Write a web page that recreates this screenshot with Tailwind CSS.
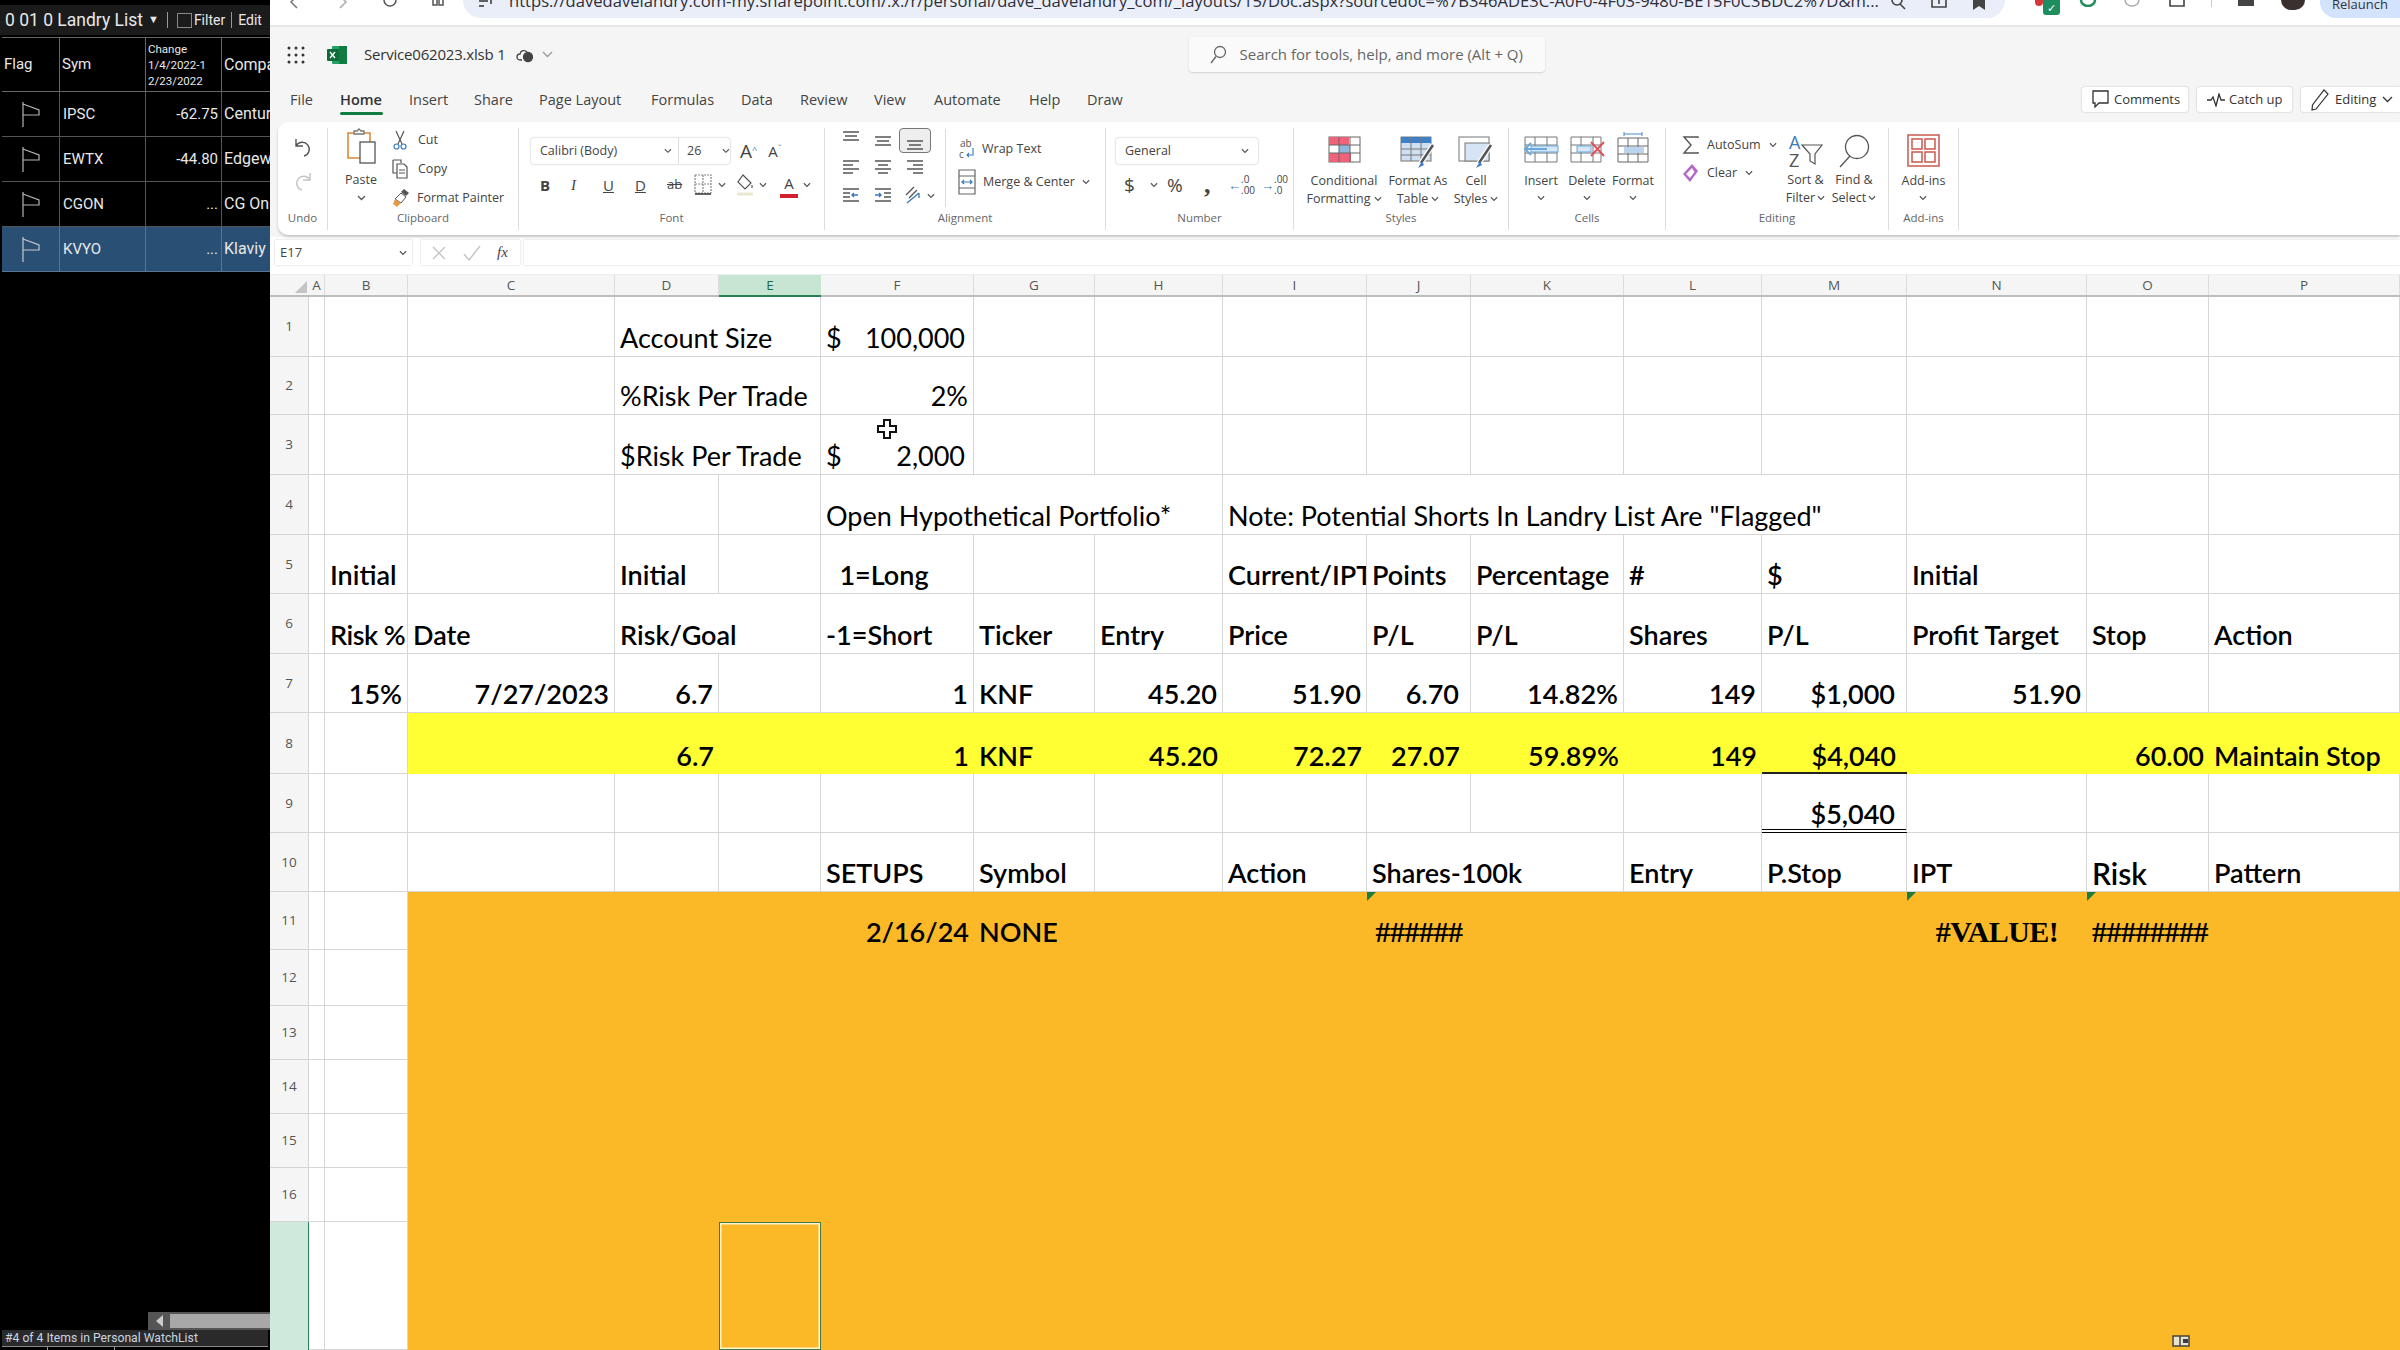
<!DOCTYPE html>
<html lang="en">
<head>
  <meta charset="UTF-8" />
  <title>Service062023.xlsb</title>
  <script src="https://cdn.jsdelivr.net/npm/@tailwindcss/browser@4"></script>
</head>
<body class="bg-white">
  <div class="flex w-[2400px] h-[1350px] overflow-hidden font-['Open_Sans',sans-serif] text-[#444]">

    <!-- Watchlist panel -->
    <aside class="w-[270px] shrink-0 bg-black flex flex-col text-[#e8e8e8] font-['Roboto',sans-serif] overflow-hidden">
      <div class="mt-[5px] h-[30px] bg-[#1b1b1b] flex items-center pl-[5px] text-[17.5px] whitespace-nowrap">
        <span>0 01 0 Landry List</span>
        <span class="ml-[5px] text-[11px]">▼</span>
        <span class="ml-[8px] h-[16px] border-l border-[#999]"></span>
        <span class="ml-[9px] w-[15px] h-[15px] border border-[#888]"></span>
        <span class="ml-[2px] text-[14px]">Filter</span>
        <span class="ml-[6px] h-[16px] border-l border-[#999]"></span>
        <span class="ml-[6px] text-[14px]">Edit</span>
      </div>
      <div class="mt-[2px] ml-[2px] grid grid-cols-[58px_86px_76px_48px] grid-rows-[55px_45px_45px_45px_45px] text-[15px]">
        <div class="border-y border-r border-[#666] flex items-center pl-[2px]">Flag</div>
        <div class="border-y border-r border-[#666] flex items-center pl-[2px]">Sym</div>
        <div class="border-y border-r border-[#666] flex flex-col justify-center pl-[2px] text-[11.5px] leading-[16px]"><span>Change</span><span>1/4/2022-1</span><span>2/23/2022</span></div>
        <div class="border-y border-[#666] flex items-center pl-[2px] text-[16px] whitespace-nowrap">Compa</div>

        <div class="border-b border-r border-[#555] flex items-center justify-center"><svg class="w-[22px] h-[27px]" viewBox="0 0 22 27" fill="none" stroke="#b4b4b4" stroke-width="1.2"><path d="M3 1v25M3 3l16 6v5H3"/></svg></div>
        <div class="border-b border-r border-[#555] flex items-center pl-[3px]">IPSC</div>
        <div class="border-b border-r border-[#555] flex items-center justify-end pr-[3px]">-62.75</div>
        <div class="border-b border-[#555] flex items-center pl-[2px] text-[16px] whitespace-nowrap">Centur</div>

        <div class="border-b border-r border-[#555] flex items-center justify-center"><svg class="w-[22px] h-[27px]" viewBox="0 0 22 27" fill="none" stroke="#b4b4b4" stroke-width="1.2"><path d="M3 1v25M3 3l16 6v5H3"/></svg></div>
        <div class="border-b border-r border-[#555] flex items-center pl-[3px]">EWTX</div>
        <div class="border-b border-r border-[#555] flex items-center justify-end pr-[3px]">-44.80</div>
        <div class="border-b border-[#555] flex items-center pl-[2px] text-[16px] whitespace-nowrap">Edgew</div>

        <div class="border-b border-r border-[#555] flex items-center justify-center"><svg class="w-[22px] h-[27px]" viewBox="0 0 22 27" fill="none" stroke="#b4b4b4" stroke-width="1.2"><path d="M3 1v25M3 3l16 6v5H3"/></svg></div>
        <div class="border-b border-r border-[#555] flex items-center pl-[3px]">CGON</div>
        <div class="border-b border-r border-[#555] flex items-center justify-end pr-[3px]">...</div>
        <div class="border-b border-[#555] flex items-center pl-[2px] text-[16px] whitespace-nowrap">CG On</div>

        <div class="bg-[#2a4f75] border-b border-r border-[#5a7590] flex items-center justify-center"><svg class="w-[22px] h-[27px]" viewBox="0 0 22 27" fill="none" stroke="#c8c8c8" stroke-width="1.2"><path d="M3 1v25M3 3l16 6v5H3"/></svg></div>
        <div class="bg-[#2a4f75] border-b border-r border-[#5a7590] flex items-center pl-[3px]">KVYO</div>
        <div class="bg-[#2a4f75] border-b border-r border-[#5a7590] flex items-center justify-end pr-[3px]">...</div>
        <div class="bg-[#2a4f75] border-b border-[#5a7590] flex items-center pl-[2px] text-[16px] whitespace-nowrap">Klaviy</div>
      </div>
      <div class="flex-1"></div>
      <div class="h-[18px] ml-[148px] bg-[#555] flex items-center">
        <span class="ml-[8px] w-0 h-0 border-y-[6px] border-y-transparent border-r-[7px] border-r-[#ccc]"></span>
        <span class="ml-[7px] flex-1 h-[14px] bg-[#a8a8a8]"></span>
      </div>
      <div class="h-[16px] mx-[2px] bg-[#2a2a2a] flex items-center pl-[3px] text-[12.2px] text-[#c9d4e0] whitespace-nowrap">#4 of 4 Items in Personal WatchList</div>
      <div class="h-[4px] mx-[2px] border-t border-[#888] flex">
        <span class="ml-[45px] h-[3px] border-l border-[#999]"></span>
        <span class="ml-[66px] h-[3px] border-l border-[#999]"></span>
      </div>
    </aside>

    <!-- Excel window -->
    <main class="flex-1 min-w-0 flex flex-col">

      <!-- Browser chrome, mostly cut off at the top -->
      <div class="h-[27px] shrink-0 bg-white border-b-2 border-[#e6e6e6] flex items-start overflow-hidden">
        <div class="w-[200px] h-[10px] flex items-start pl-[18px] gap-[33px] text-[#555]">
          <svg class="w-[14px] h-[10px]" viewBox="0 0 14 10" fill="none" stroke="#777" stroke-width="1.5"><path d="M9 -4L3 2l6 6"/></svg>
          <svg class="w-[14px] h-[10px]" viewBox="0 0 14 10" fill="none" stroke="#aaa" stroke-width="1.5"><path d="M5 -4l6 6-6 6"/></svg>
          <svg class="w-[16px] h-[10px]" viewBox="0 0 16 10" fill="none" stroke="#555" stroke-width="1.5"><path d="M2 0a6 6 0 0 0 12 0"/></svg>
          <svg class="w-[14px] h-[10px]" viewBox="0 0 14 10" fill="none" stroke="#555" stroke-width="1.5"><path d="M2 0v5h4V0M8 0v5h4V0"/></svg>
        </div>
        <div class="w-[1542px] h-[18px] shrink-0 bg-[#e9eef8] rounded-b-[18px] flex items-start overflow-hidden pl-[14px]">
          <svg class="w-[18px] h-[10px] mt-[-2px]" viewBox="0 0 18 10" fill="none" stroke="#333" stroke-width="1.5"><path d="M2 3h9M2 8h5M14 1v5"/></svg>
          <span class="ml-[14px] mt-[-11px] text-[16.6px] text-[#2f2f3a] whitespace-nowrap">https://davedavelandry.com-my.sharepoint.com/:x:/r/personal/dave_davelandry_com/_layouts/15/Doc.aspx?sourcedoc=%7B346ADE3C-A0F0-4F03-9480-BE15F0C3BDC2%7D&amp;m...</span>
          <span class="ml-auto flex gap-[24px] pr-[18px]">
            <svg class="w-[16px] h-[10px]" viewBox="0 0 16 10" fill="none" stroke="#444" stroke-width="1.6"><circle cx="6" cy="0" r="5"/><path d="M9 4l5 5"/></svg>
            <svg class="w-[16px] h-[10px]" viewBox="0 0 16 10" fill="none" stroke="#444" stroke-width="1.6"><path d="M1 0v7h14V0M8 0v4"/></svg>
            <svg class="w-[16px] h-[10px]" viewBox="0 0 16 10" fill="#444"><path d="M2 0h12v10L8 6 2 10z"/></svg>
          </span>
        </div>
        <div class="flex-1 flex items-start pl-[30px]">
          <span class="w-[8px] h-[6px] bg-[#d6383c] rounded-b-sm"></span>
          <span class="w-[17px] h-[15px] bg-[#1e8e5e] rounded-b-[3px] text-white text-[11px] leading-[15px] text-center">✓</span>
          <svg class="ml-[19px] w-[18px] h-[7px]" viewBox="0 0 18 7" fill="none" stroke="#1e8e5e" stroke-width="2.5"><path d="M2 0a7 6 0 0 0 14 0"/></svg>
          <svg class="ml-[26px] w-[18px] h-[7px]" viewBox="0 0 18 7" fill="none" stroke="#aaa" stroke-width="1.4"><path d="M2 0a7 6 0 0 0 14 0"/></svg>
          <svg class="ml-[27px] w-[18px] h-[7px]" viewBox="0 0 18 7" fill="none" stroke="#444" stroke-width="1.6"><path d="M2 0v6h14V0"/></svg>
          <span class="ml-[25px] h-[7px] border-l border-[#ccc]"></span>
          <svg class="ml-[25px] w-[18px] h-[7px]" viewBox="0 0 18 7" fill="#444"><path d="M1 0h16v6H1z"/></svg>
          <span class="ml-[26px] w-[24px] h-[10px] bg-[#3a3030] rounded-b-full"></span>
          <span class="ml-[15px] w-[80px] h-[18px] bg-[#d3e3fd] rounded-bl-[16px] overflow-hidden pl-[12px] text-[13px] leading-[8px] text-[#333] whitespace-nowrap">Relaunch</span>
        </div>
      </div>

      <!-- Title and tabs band -->
      <div class="h-[95px] shrink-0 bg-[#f5f5f5] flex flex-col">
        <div class="h-[55px] flex items-center pl-[17px]">
          <svg class="w-[18px] h-[18px]" viewBox="0 0 18 18" fill="#333"><circle cx="2" cy="2" r="1.5"/><circle cx="9" cy="2" r="1.5"/><circle cx="16" cy="2" r="1.5"/><circle cx="2" cy="9" r="1.5"/><circle cx="9" cy="9" r="1.5"/><circle cx="16" cy="9" r="1.5"/><circle cx="2" cy="16" r="1.5"/><circle cx="9" cy="16" r="1.5"/><circle cx="16" cy="16" r="1.5"/></svg>
          <svg class="ml-[22px] w-[20px] h-[18px]" viewBox="0 0 20 18"><rect x="5" y="0" width="15" height="18" rx="1" fill="#21a366"/><rect x="12" y="0" width="8" height="18" fill="#107c41"/><rect x="0" y="3" width="12" height="12" rx="1" fill="#0e6b38"/><path d="M3 6l5 6M8 6l-5 6" stroke="#fff" stroke-width="1.3"/></svg>
          <span class="ml-[17px] text-[15px] text-[#333] whitespace-nowrap tracking-[-0.2px]">Service062023.xlsb 1</span>
          <svg class="ml-[10px] w-[18px] h-[16px]" viewBox="0 0 18 16" fill="none" stroke="#444" stroke-width="1.3"><path d="M6 13H4a3 3 0 0 1 0-6 4 4 0 0 1 7-2"/><circle cx="12" cy="10" r="4.5" fill="#444"/></svg>
          <svg class="ml-[8px] w-[11px] h-[7px]" viewBox="0 0 11 7" fill="none" stroke="#999" stroke-width="1.3"><path d="M1 1l4.500 4.500L10 1"/></svg>
          <div class="ml-[636px] w-[356px] h-[35px] bg-[#fafafa] rounded-[4px] shadow-[0_1px_2px_rgba(0,0,0,0.15)] flex items-center pl-[20px] text-[15px] text-[#666] whitespace-nowrap">
            <svg class="w-[18px] h-[20px]" viewBox="0 0 18 20" fill="none" stroke="#666" stroke-width="1.3"><circle cx="11" cy="7" r="5.5"/><path d="M7 11.5L2 18"/></svg>
            <span class="ml-[13px]">Search for tools, help, and more (Alt + Q)</span>
          </div>
        </div>
        <div class="h-[40px] flex items-start pl-[20px] text-[14.5px] text-[#444] whitespace-nowrap">
          <span class="mt-[7px] w-[50px]">File</span>
          <span class="mt-[7px] w-[69px] h-[27px] font-semibold text-[#333] relative">Home<span class="absolute left-0 bottom-[1px] w-[43px] h-[3px] bg-[#107c41] rounded"></span></span>
          <span class="mt-[7px] w-[65px]">Insert</span>
          <span class="mt-[7px] w-[65px]">Share</span>
          <span class="mt-[7px] w-[112px]">Page Layout</span>
          <span class="mt-[7px] w-[90px]">Formulas</span>
          <span class="mt-[7px] w-[59px]">Data</span>
          <span class="mt-[7px] w-[74px]">Review</span>
          <span class="mt-[7px] w-[60px]">View</span>
          <span class="mt-[7px] w-[95px]">Automate</span>
          <span class="mt-[7px] w-[58px]">Help</span>
          <span class="mt-[7px] w-[36px]">Draw</span>
          <div class="ml-auto flex gap-[9px] mt-[5px] text-[13px] text-[#333]">
            <div class="w-[106px] h-[25px] bg-white rounded-[3px] shadow-[0_0_2px_rgba(0,0,0,0.25)] flex items-center pl-[10px] gap-[5px]"><svg class="w-[17px] h-[19px]" viewBox="0 0 17 19" fill="none" stroke="#333" stroke-width="1.3"><path d="M1 1h15v12H7l-4 4v-4H1z"/></svg>Comments</div>
            <div class="w-[95px] h-[25px] bg-white rounded-[3px] shadow-[0_0_2px_rgba(0,0,0,0.25)] flex items-center pl-[10px] gap-[4px]"><svg class="w-[18px] h-[14px]" viewBox="0 0 18 14" fill="none" stroke="#333" stroke-width="1.3"><path d="M0 7h4l2-3 3 9 3-12 2 6h4"/></svg>Catch up</div>
            <div class="w-[99px] h-[25px] bg-white rounded-l-[3px] shadow-[0_0_2px_rgba(0,0,0,0.25)] flex items-center pl-[10px] gap-[6px]"><svg class="w-[18px] h-[22px]" viewBox="0 0 18 22" fill="none" stroke="#333" stroke-width="1.2"><path d="M13 1l4 4L5 20l-4 1 .5-5z"/></svg>Editing<svg class="w-[11px] h-[7px]" viewBox="0 0 11 7" fill="none" stroke="#333" stroke-width="1.3"><path d="M1 1l4.500 4.500L10 1"/></svg></div>
          </div>
        </div>
      </div>

      <!-- Ribbon -->
      <div class="h-[115px] shrink-0 bg-[#f5f5f5]">
        <div class="ml-[8px] h-[113px] bg-white rounded-l-[10px] shadow-[0_2px_3px_rgba(0,0,0,0.2)] flex text-[12.5px] text-[#444] whitespace-nowrap pt-[6px]">

          <!-- Undo -->
          <div class="w-[50px] h-[102px] border-r border-[#ddd] flex flex-col items-center">
            <div class="flex-1 flex flex-col items-center gap-[14px] pt-[9px]">
              <svg class="w-[18px] h-[20px]" viewBox="0 0 18 20" fill="none" stroke="#555" stroke-width="1.4"><path d="M2 2v7h7M2 9a7 7 0 1 1 8 10"/></svg>
              <svg class="w-[18px] h-[20px]" viewBox="0 0 18 20" fill="none" stroke="#c4c4c4" stroke-width="1.4"><path d="M16 2v7H9M16 9A7 7 0 1 0 8 19"/></svg>
            </div>
            <span class="text-[11.5px] text-[#666] mb-[4px]">Undo</span>
          </div>

          <!-- Clipboard -->
          <div class="w-[191px] h-[102px] border-r border-[#ddd] flex flex-col items-center">
            <div class="flex-1 w-full flex pl-[15px]">
              <div class="w-[36px] flex flex-col items-center">
                <svg class="w-[32px] h-[36px]" viewBox="0 0 32 36" fill="none"><path d="M3 5h22v25H3z" stroke="#d98a36" stroke-width="1.6"/><path d="M9 6V3h3l2-2 2 2h3v3z" stroke="#777" stroke-width="1.3" fill="#fff"/><rect x="15" y="14" width="15" height="21" fill="#fff" stroke="#555" stroke-width="1.3"/></svg>
                <span class="mt-[8px] leading-[16px]">Paste</span>
                <svg class="mt-[7px] w-[9px] h-[6px]" viewBox="0 0 9 6" fill="none" stroke="#555" stroke-width="1.3"><path d="M1 1l3.500 3.500L8 1"/></svg>
              </div>
              <div class="ml-[13px] flex flex-col gap-[11px] pt-[3px]">
                <div class="flex items-center h-[18px] gap-[10px]"><svg class="w-[16px] h-[20px]" viewBox="0 0 16 20" fill="none" stroke="#555" stroke-width="1.2"><path d="M4 1l6 13M12 1L6 14"/><circle cx="4.5" cy="16.5" r="2.5" stroke="#3a7ab8"/><circle cx="11.500" cy="16.500" r="2.500" stroke="#3a7ab8"/></svg>Cut</div>
                <div class="flex items-center h-[18px] gap-[10px]"><svg class="w-[16px] h-[20px]" viewBox="0 0 16 20" fill="none" stroke="#555" stroke-width="1.2"><path d="M1 1h8v3M1 1v13h4"/><path d="M5 5h7l3 3v11H5zM7 11h6M7 14h6"/></svg>Copy</div>
                <div class="flex items-center h-[18px] gap-[7px]"><svg class="w-[18px] h-[20px]" viewBox="0 0 18 20"><path d="M12 1l5 4-3 3-5-4z" fill="#555"/><path d="M9 5l5 4-5 6-6-4z" fill="#fff" stroke="#555"/><path d="M3 11l6 4-4 4-4-3z" fill="#e59a4a"/></svg>Format Painter</div>
              </div>
            </div>
            <span class="text-[11.5px] text-[#666] mb-[4px]">Clipboard</span>
          </div>

          <!-- Font -->
          <div class="w-[306px] h-[102px] border-r border-[#ddd] flex flex-col items-center">
            <div class="flex-1 w-full pl-[12px] pt-[10px]">
              <div class="flex items-center">
                <div class="w-[199px] h-[26px] rounded-[3px] shadow-[0_0_2px_rgba(0,0,0,0.35)] flex items-center pl-[9px] text-[12.5px]">
                  <span class="w-[127px]">Calibri (Body)</span>
                  <svg class="w-[8px] h-[6px]" viewBox="0 0 9 6" fill="none" stroke="#555" stroke-width="1.3"><path d="M1 1l3.500 3.500L8 1"/></svg>
                  <span class="ml-[6px] h-[26px] border-l border-[#ddd]"></span>
                  <span class="ml-[8px] w-[36px]">26</span>
                  <svg class="w-[8px] h-[6px]" viewBox="0 0 9 6" fill="none" stroke="#555" stroke-width="1.3"><path d="M1 1l3.500 3.500L8 1"/></svg>
                </div>
                <span class="ml-[10px] text-[19px] leading-none">A<sup class="text-[9px] text-[#3a7ab8]">^</sup></span>
                <span class="ml-[11px] text-[15px] leading-none">A<sup class="text-[9px] text-[#3a7ab8]">ˇ</sup></span>
              </div>
              <div class="mt-[8px] ml-[9px] flex items-center h-[26px] text-[15px]">
                <span class="w-[31px] font-bold">B</span>
                <span class="w-[32px] italic font-['Liberation_Serif',serif]">I</span>
                <span class="w-[32px] underline">U</span>
                <span class="w-[32px] underline">D</span>
                <span class="w-[27px] line-through text-[13px]">ab</span>
                <svg class="w-[18px] h-[24px]" viewBox="0 0 18 24" fill="none" stroke="#888" stroke-width="1.2"><path d="M1 2h16v18H1zM9 2v18M1 11h16" stroke-dasharray="2 1"/><path d="M1 21h16" stroke="#333" stroke-width="1.5"/></svg>
                <svg class="ml-[6px] w-[8px] h-[6px]" viewBox="0 0 9 6" fill="none" stroke="#555" stroke-width="1.3"><path d="M1 1l3.500 3.500L8 1"/></svg>
                <svg class="ml-[9px] w-[20px] h-[24px]" viewBox="0 0 20 24" fill="none" stroke="#555" stroke-width="1.2"><path d="M8 2l8 8-6 6-7-7z"/><path d="M17 12v3"/><path d="M2 21h16" stroke="#e8e8d0" stroke-width="3"/></svg>
                <svg class="ml-[4px] w-[8px] h-[6px]" viewBox="0 0 9 6" fill="none" stroke="#555" stroke-width="1.3"><path d="M1 1l3.500 3.500L8 1"/></svg>
                <span class="ml-[13px] w-[18px] h-[25px] leading-[20px] text-center border-b-[4px] border-[#d11f2e]">A</span>
                <svg class="ml-[5px] w-[8px] h-[6px]" viewBox="0 0 9 6" fill="none" stroke="#555" stroke-width="1.3"><path d="M1 1l3.500 3.500L8 1"/></svg>
              </div>
            </div>
            <span class="text-[11.5px] text-[#666] mb-[4px]">Font</span>
          </div>

          <!-- Alignment -->
          <div class="w-[281px] h-[102px] border-r border-[#ddd] flex flex-col items-center">
            <div class="h-[81px] w-full flex pl-[10px]">
              <div class="w-[96px] grid grid-cols-[32px_32px_32px] grid-rows-[25px_30px_26px] items-center justify-items-center">
                <svg class="w-[18px] h-[14px] -mt-[6px]" viewBox="0 0 18 14" stroke="#555" stroke-width="1.4"><path d="M1 1h16M3 5h12M1 9h16"/></svg>
                <svg class="w-[18px] h-[14px]" viewBox="0 0 18 14" stroke="#555" stroke-width="1.4"><path d="M1 3h16M3 7h12M1 11h16"/></svg>
                <div class="w-[32px] h-[25px] rounded-[4px] border border-[#777] bg-[#eee] flex items-center justify-center"><svg class="w-[18px] h-[14px] mt-[4px]" viewBox="0 0 18 14" stroke="#555" stroke-width="1.4"><path d="M1 5h16M3 9h12M1 13h16"/></svg></div>
                <svg class="w-[18px] h-[16px]" viewBox="0 0 18 16" stroke="#555" stroke-width="1.4"><path d="M1 1h16M1 5h10M1 9h16M1 13h10"/></svg>
                <svg class="w-[18px] h-[16px]" viewBox="0 0 18 16" stroke="#555" stroke-width="1.4"><path d="M1 1h16M4 5h10M1 9h16M4 13h10"/></svg>
                <svg class="w-[18px] h-[16px]" viewBox="0 0 18 16" stroke="#555" stroke-width="1.4"><path d="M1 1h16M7 5h10M1 9h16M7 13h10"/></svg>
                <svg class="w-[18px] h-[16px]" viewBox="0 0 18 16" fill="none" stroke="#555" stroke-width="1.4"><path d="M1 1h16M1 5h7M1 9h7M1 13h16"/><path d="M16 7h-6M12 5l-2 2 2 2" stroke="#3a7ab8"/></svg>
                <svg class="w-[18px] h-[16px]" viewBox="0 0 18 16" fill="none" stroke="#555" stroke-width="1.4"><path d="M1 1h16M10 5h7M10 9h7M1 13h16"/><path d="M1 7h6M5 5l2 2-2 2" stroke="#3a7ab8"/></svg>
                <div class="flex items-center gap-[5px] ml-[8px]"><svg class="w-[18px] h-[20px]" viewBox="0 0 18 20" fill="none" stroke="#555" stroke-width="1.3"><path d="M2 9l8-8M5 12l8-8"/><path d="M3 17L15 7M15 7v5" stroke="#3a7ab8"/></svg><svg class="w-[8px] h-[6px]" viewBox="0 0 9 6" fill="none" stroke="#555" stroke-width="1.3"><path d="M1 1l3.500 3.500L8 1"/></svg></div>
              </div>
              <div class="ml-[14px] h-[78px] mt-[1px] border-l border-[#ddd] pl-[12px] flex flex-col gap-[15px] pt-[11px]">
                <div class="flex items-center h-[18px] gap-[6px]"><svg class="w-[18px] h-[22px]" viewBox="0 0 18 22" fill="none" stroke="#555" stroke-width="1.1"><text x="2" y="9" font-size="10" fill="#555" stroke="none">ab</text><text x="1" y="20" font-size="10" fill="#555" stroke="none">c</text><path d="M15 10v7H9m2-2l-2 2 2 2" stroke="#3a7ab8"/></svg>Wrap Text</div>
                <div class="flex items-center h-[18px] gap-[7px]"><svg class="w-[18px] h-[26px]" viewBox="0 0 18 26" fill="none" stroke="#666" stroke-width="1.2"><path d="M1 1h16v24H1zM1 7h16M1 19h16"/><path d="M4 13h10M6 11l-2 2 2 2M12 11l2 2-2 2" stroke="#3a7ab8"/></svg>Merge &amp; Center<svg class="w-[8px] h-[6px]" viewBox="0 0 9 6" fill="none" stroke="#555" stroke-width="1.3"><path d="M1 1l3.500 3.500L8 1"/></svg></div>
              </div>
            </div>
            <span class="mt-auto text-[11.5px] text-[#666] mb-[4px]">Alignment</span>
          </div>

          <!-- Number -->
          <div class="w-[188px] h-[102px] border-r border-[#ddd] flex flex-col items-center">
            <div class="flex-1 w-full pl-[10px] pt-[10px]">
              <div class="w-[142px] h-[26px] rounded-[3px] shadow-[0_0_2px_rgba(0,0,0,0.35)] flex items-center justify-between px-[9px]">General<svg class="w-[8px] h-[6px]" viewBox="0 0 9 6" fill="none" stroke="#555" stroke-width="1.3"><path d="M1 1l3.500 3.500L8 1"/></svg></div>
              <div class="mt-[8px] ml-[8px] flex items-center h-[26px]">
                <span class="w-[26px] text-[19px]">$</span>
                <svg class="w-[8px] h-[6px]" viewBox="0 0 9 6" fill="none" stroke="#555" stroke-width="1.3"><path d="M1 1l3.500 3.500L8 1"/></svg>
                <span class="ml-[9px] w-[37px] text-[19px]">%</span>
                <span class="w-[24px] text-[26px] leading-[14px] font-bold font-['Liberation_Serif',serif]">,</span>
                <span class="w-[33px] text-[10px] leading-[10px] flex items-center"><span class="text-[#3a7ab8] text-[13px]">←</span><span class="leading-[11px]">.0<br />.00</span></span>
                <span class="w-[28px] text-[10px] leading-[10px] flex items-center"><span class="text-[#3a7ab8] text-[13px]">→</span><span class="leading-[11px]">.00<br />.0</span></span>
              </div>
            </div>
            <span class="text-[11.5px] text-[#666] mb-[4px]">Number</span>
          </div>

          <!-- Styles -->
          <div class="w-[215px] h-[102px] border-r border-[#ddd] flex flex-col items-center">
            <div class="flex-1 w-full flex pl-[11px] pt-[8px] text-center leading-[18px]">
              <div class="w-[78px] flex flex-col items-center">
                <svg class="w-[33px] h-[27px]" viewBox="0 0 33 27" fill="none"><rect x="1" y="1" width="31" height="25" fill="#fff" stroke="#666"/><rect x="1" y="1" width="20" height="8" fill="#f0627a"/><rect x="11" y="9" width="11" height="8" fill="#8fb8dc"/><rect x="1" y="17" width="22" height="9" fill="#f0627a"/><path d="M11 1v25M22 1v25M1 9h31M1 17h31" stroke="#666"/></svg>
                <span class="mt-[9px]">Conditional</span>
                <span class="flex items-center gap-[3px]">Formatting<svg class="w-[8px] h-[6px]" viewBox="0 0 9 6" fill="none" stroke="#555" stroke-width="1.3"><path d="M1 1l3.500 3.500L8 1"/></svg></span>
              </div>
              <div class="w-[70px] flex flex-col items-center">
                <svg class="w-[36px] h-[34px] -mb-[7px]" viewBox="0 0 36 34" fill="none"><rect x="1" y="1" width="30" height="24" fill="#cfe0f3" stroke="#777"/><rect x="1" y="1" width="30" height="6" fill="#3f7fc4"/><path d="M11 1v24M21 1v24M1 13h30M1 19h30" stroke="#777"/><path d="M33 9L21 27" stroke="#fff" stroke-width="5"/><path d="M33 9L21 27" stroke="#555" stroke-width="2.5"/><path d="M22 25l-4 7 6-3z" fill="#3f7fc4"/></svg>
                <span class="mt-[9px]">Format As</span>
                <span class="flex items-center gap-[3px]">Table<svg class="w-[8px] h-[6px]" viewBox="0 0 9 6" fill="none" stroke="#555" stroke-width="1.3"><path d="M1 1l3.500 3.500L8 1"/></svg></span>
              </div>
              <div class="w-[46px] flex flex-col items-center">
                <svg class="w-[36px] h-[34px] -mb-[7px]" viewBox="0 0 36 34" fill="none"><rect x="1" y="1" width="30" height="24" fill="#fff" stroke="#777"/><rect x="7" y="7" width="24" height="18" fill="#d5e5f6" stroke="#777"/><path d="M33 9L21 27" stroke="#fff" stroke-width="5"/><path d="M33 9L21 27" stroke="#555" stroke-width="2.5"/><path d="M22 25l-4 7 6-3z" fill="#3f7fc4"/></svg>
                <span class="mt-[9px]">Cell</span>
                <span class="flex items-center gap-[3px]">Styles<svg class="w-[8px] h-[6px]" viewBox="0 0 9 6" fill="none" stroke="#555" stroke-width="1.3"><path d="M1 1l3.500 3.500L8 1"/></svg></span>
              </div>
            </div>
            <span class="text-[11.5px] text-[#666] mb-[4px]">Styles</span>
          </div>

          <!-- Cells -->
          <div class="w-[157px] h-[102px] border-r border-[#ddd] flex flex-col items-center">
            <div class="flex-1 w-full flex pl-[9px] pt-[8px] text-center leading-[18px]">
              <div class="w-[46px] flex flex-col items-center">
                <svg class="w-[36px] h-[27px]" viewBox="0 0 36 27" fill="none" stroke="#777"><path d="M2 1h32v25H2zM12 1v25M24 1v25M2 9h32M2 17h32"/><rect x="8" y="10" width="27" height="6" fill="#d5e8f6" stroke="#6ba7dc"/><path d="M24 13H2M8 7l-6 6 6 6" stroke="#6ba7dc" stroke-width="2"/></svg>
                <span class="mt-[9px]">Insert</span>
                <svg class="mt-[5px] w-[8px] h-[6px]" viewBox="0 0 9 6" fill="none" stroke="#555" stroke-width="1.3"><path d="M1 1l3.500 3.500L8 1"/></svg>
              </div>
              <div class="w-[46px] flex flex-col items-center">
                <svg class="w-[36px] h-[27px]" viewBox="0 0 36 27" fill="none" stroke="#777"><path d="M2 1h30v25H2zM12 1v25M24 1v25M2 9h30M2 17h30"/><rect x="8" y="10" width="14" height="6" fill="#d5e8f6" stroke="#6ba7dc"/><path d="M22 6l13 14M35 6L22 20" stroke="#e0525f" stroke-width="2"/></svg>
                <span class="mt-[9px]">Delete</span>
                <svg class="mt-[5px] w-[8px] h-[6px]" viewBox="0 0 9 6" fill="none" stroke="#555" stroke-width="1.3"><path d="M1 1l3.500 3.500L8 1"/></svg>
              </div>
              <div class="w-[46px] flex flex-col items-center">
                <svg class="w-[34px] h-[31px] -mt-[4px]" viewBox="0 0 34 31" fill="none" stroke="#666"><path d="M8 2h18M8 0v4M26 0v4" stroke="#4a8ac9"/><path d="M2 6h30v24H2zM12 6v24M22 6v24M2 14h30M2 22h30"/><rect x="8" y="15" width="20" height="6" fill="#bcd5ee" stroke="none"/></svg>
                <span class="mt-[9px]">Format</span>
                <svg class="mt-[5px] w-[8px] h-[6px]" viewBox="0 0 9 6" fill="none" stroke="#555" stroke-width="1.3"><path d="M1 1l3.500 3.500L8 1"/></svg>
              </div>
            </div>
            <span class="text-[11.5px] text-[#666] mb-[4px]">Cells</span>
          </div>

          <!-- Editing -->
          <div class="w-[223px] h-[102px] border-r border-[#ddd] flex flex-col items-center">
            <div class="flex-1 w-full flex pl-[16px] pt-[6px]">
              <div class="w-[111px] flex flex-col gap-[10px] pt-[2px]">
                <div class="flex items-center h-[18px] gap-[8px]"><svg class="w-[17px] h-[18px]" viewBox="0 0 17 18" fill="none" stroke="#555" stroke-width="1.4"><path d="M16 2V1H2l7 8-7 8h14v-1"/></svg>AutoSum<svg class="w-[8px] h-[6px]" viewBox="0 0 9 6" fill="none" stroke="#555" stroke-width="1.3"><path d="M1 1l3.500 3.500L8 1"/></svg></div>
                <div class="flex items-center h-[18px] gap-[8px]"><svg class="w-[17px] h-[20px]" viewBox="0 0 17 20" fill="#b566c9"><path d="M10 1l6 7-8 11-7-8zM10 5l-6 6 4 4 4.500-6z" fill-rule="evenodd"/></svg>Clear<svg class="w-[8px] h-[6px]" viewBox="0 0 9 6" fill="none" stroke="#555" stroke-width="1.3"><path d="M1 1l3.500 3.500L8 1"/></svg></div>
              </div>
              <div class="w-[47px] -ml-[11px] flex flex-col items-center text-center leading-[18px]">
                <svg class="w-[36px] h-[34px]" viewBox="0 0 36 34" fill="none"><text x="1" y="15" font-size="18" fill="#3a7ab8" font-family="Open Sans">A</text><text x="1" y="33" font-size="18" fill="#555" font-family="Open Sans">Z</text><path d="M14 11h20l-7 9v10l-5-3v-7z" stroke="#555" stroke-width="1.2"/></svg>
                <span class="mt-[3px]">Sort &amp;</span>
                <span class="flex items-center gap-[2px]">Filter<svg class="w-[8px] h-[6px]" viewBox="0 0 9 6" fill="none" stroke="#555" stroke-width="1.3"><path d="M1 1l3.500 3.500L8 1"/></svg></span>
              </div>
              <div class="w-[50px] flex flex-col items-center text-center leading-[18px]">
                <svg class="w-[34px] h-[34px] -mb-[2px]" viewBox="0 0 34 34" fill="none" stroke="#555" stroke-width="1.3"><circle cx="20" cy="13" r="11.500"/><path d="M13 22L3 33"/></svg>
                <span class="mt-[5px]">Find &amp;</span>
                <span class="flex items-center gap-[2px]">Select<svg class="w-[8px] h-[6px]" viewBox="0 0 9 6" fill="none" stroke="#555" stroke-width="1.3"><path d="M1 1l3.500 3.500L8 1"/></svg></span>
              </div>
            </div>
            <span class="text-[11.5px] text-[#666] mb-[4px]">Editing</span>
          </div>

          <!-- Add-ins -->
          <div class="w-[70px] h-[102px] border-r border-[#ddd] flex flex-col items-center">
            <div class="flex-1 flex flex-col items-center pt-[6px] leading-[18px]">
              <svg class="w-[33px] h-[33px]" viewBox="0 0 33 33" fill="none" stroke="#c9584d" stroke-width="1.5"><rect x="1" y="1" width="31" height="31"/><rect x="5" y="5" width="10" height="10"/><rect x="18" y="5" width="10" height="10"/><rect x="5" y="18" width="10" height="10"/><rect x="18" y="18" width="10" height="10"/></svg>
              <span class="mt-[5px]">Add-ins</span>
              <svg class="mt-[5px] w-[8px] h-[6px]" viewBox="0 0 9 6" fill="none" stroke="#555" stroke-width="1.3"><path d="M1 1l3.500 3.500L8 1"/></svg>
            </div>
            <span class="text-[11.5px] text-[#666] mb-[4px]">Add-ins</span>
          </div>
        </div>
      </div>

      <!-- Formula bar -->
      <div class="h-[38px] shrink-0 flex items-start pt-[3px] pl-[5px] gap-[9px] border-b border-[#eee] text-[#444]">
        <div class="w-[137px] h-[25px] bg-white shadow-[0_0_2px_rgba(0,0,0,0.2)] flex items-center justify-between px-[5px] text-[13px]">E17<svg class="w-[8px] h-[6px]" viewBox="0 0 9 6" fill="none" stroke="#555" stroke-width="1.3"><path d="M1 1l3.500 3.500L8 1"/></svg></div>
        <div class="w-[99px] h-[25px] bg-white shadow-[0_0_2px_rgba(0,0,0,0.2)] flex items-center pl-[10px] gap-[16px]">
          <svg class="w-[16px] h-[16px]" viewBox="0 0 16 16" stroke="#c4c4c4" stroke-width="1.4"><path d="M2 2l12 12M14 2L2 14"/></svg>
          <svg class="w-[18px] h-[16px]" viewBox="0 0 18 16" fill="none" stroke="#c4c4c4" stroke-width="1.4"><path d="M1 9l5 6L17 1"/></svg>
          <span class="italic font-['Liberation_Serif',serif] text-[15px]">fx</span>
        </div>
        <div class="flex-1 h-[25px] -ml-[5px] bg-white shadow-[0_0_2px_rgba(0,0,0,0.2)]"></div>
      </div>

      <!-- Sheet -->
      <div class="relative flex-1 overflow-hidden font-['Lato',sans-serif] text-black">
        <div id="sheet"></div>
        <!-- mouse cursor and the small paste marker float over the cells -->
        <svg class="absolute left-[607px] top-[144px] w-[20px] h-[20px]" viewBox="0 0 20 20" fill="#fff" stroke="#111" stroke-width="2"><path d="M7 1h6v6h6v6h-6v6H7v-6H1V7h6z"/></svg>
        <svg class="absolute left-[1902px] top-[1060px] w-[18px] h-[12px]" viewBox="0 0 18 12" fill="#e8e2d0" stroke="#4a4438" stroke-width="1.5"><rect x="1" y="1" width="16" height="10"/><path d="M8 1v10"/><rect x="11" y="4" width="5" height="4" fill="#3a3a50" stroke="none"/></svg>
      </div>
    </main>
  </div>

  <script>
    const letters = "ABCDEFGHIJKLMNOP".split("");
    const gridCols = "grid grid-cols-[39px_16px_83px_207px_104px_102px_153px_121px_128px_144px_104px_153px_138px_145px_180px_122px_191px]";
    const spans = { 2: "col-span-2", 3: "col-span-3", 5: "col-span-5" };

    const L = "text-left";
    const B = "font-semibold";
    const RB = "text-right font-semibold";
    const INSET = "text-right font-semibold pr-[11px]";
    const ERR = "font-['Liberation_Serif',serif] font-bold text-[30px] text-center tracking-[-0.5px]";

    // [cell text, text classes, column span, green error corner, cell classes]
    const rows = [
      { h: "h-[60px]", cells: { D: ["Account Size", L, 2], F: ["$ 100,000", "acct"] } },
      { h: "h-[58px]", cells: { D: ["%Risk Per Trade", L, 2], F: ["2%", "text-right"] } },
      { h: "h-[60px]", cells: { D: ["$Risk Per Trade", L, 2], F: ["$ 2,000", "acct"] } },
      { h: "h-[60px]", cells: { F: ["Open Hypothetical Portfolio*", L, 3], I: ['Note: Potential Shorts In Landry List Are "Flagged"', L, 5] } },
      { h: "h-[59px]", cells: { B: ["Initial", B], D: ["Initial", B], F: ["&nbsp;&nbsp;1=Long", B], I: ["Current/IPT", B], J: ["Points", B], K: ["Percentage", B], L: ["#", B], M: ["$", B], N: ["Initial", B] } },
      { h: "h-[60px]", cells: { B: ["Risk %", "font-semibold tracking-[-0.5px]"], C: ["Date", B], D: ["Risk/Goal", B, 2], F: ["-1=Short", B], G: ["Ticker", B], H: ["Entry", B], I: ["Price", B], J: ["P/L", B], K: ["P/L", B], L: ["Shares", B], M: ["P/L", B], N: ["Profit Target", B], O: ["Stop", B], P: ["Action", B] } },
      { h: "h-[59px]", cells: { B: ["15%", RB], C: ["7/27/2023", RB], D: ["6.7", RB], F: ["1", RB], G: ["KNF", B], H: ["45.20", RB], I: ["51.90", RB], J: ["6.70", INSET], K: ["14.82%", RB], L: ["149", RB], M: ["$1,000", INSET], N: ["51.90", RB] } },
      { h: "h-[61px]", fill: "bg-[#ffff33]", cells: { D: ["6.7", RB], F: ["1", RB], G: ["KNF", B], H: ["45.20", RB], I: ["72.27", RB], J: ["27.07", INSET], K: ["59.89%", RB], L: ["149", RB], M: ["$4,040", INSET, 1, false, "border-b-2 border-b-[#222] pb-[1px]"], O: ["60.00", RB], P: ["Maintain Stop", B] } },
      { h: "h-[59px]", cells: { M: ["$5,040", INSET, 1, false, "border-b-[4px] border-double border-b-black pb-0"] } },
      { h: "h-[59px]", cells: { F: ["SETUPS", B], G: ["Symbol", B], I: ["Action", B], J: ["Shares-100k", B, 2], L: ["Entry", B], M: ["P.Stop", B], N: ["IPT", B], O: ["Risk", "font-semibold text-[30px]"], P: ["Pattern", B] } },
      { h: "h-[58px]", fill: "bg-[#fbb928]", cells: { F: ["2/16/24", RB], G: ["NONE", B], J: ["######", ERR, 1, true], N: ["#VALUE!", ERR, 1, true], O: ["########", ERR, 1, true] } },
      { h: "h-[56px]", fill: "bg-[#fbb928]", cells: {} },
      { h: "h-[54px]", fill: "bg-[#fbb928]", cells: {} },
      { h: "h-[54px]", fill: "bg-[#fbb928]", cells: {} },
      { h: "h-[54px]", fill: "bg-[#fbb928]", cells: {} },
      { h: "h-[54px]", fill: "bg-[#fbb928]", cells: {} },
      { h: "h-[128px]", fill: "bg-[#fbb928]", active: true, cells: {} }
    ];

    function columnHeader() {
      let html = `<div class="${gridCols} h-[22px] border-b-2 border-[#bdbdbd] bg-[#f5f5f5] text-[13.5px] text-[#555] font-['Open_Sans',sans-serif]">`;
      html += `<div class="flex items-end justify-end pr-[2px] pb-[2px]"><span class="w-0 h-0 border-l-[12px] border-l-transparent border-b-[12px] border-b-[#c4c4c4]"></span></div>`;
      letters.forEach(l => {
        const cls = l === "E" ? "bg-[#c6e5d3] text-[#1f6b40] border-b-2 border-[#2d7d52] -mb-[2px]" : "border-r border-[#ddd]";
        html += `<div class="flex items-center justify-center ${cls}">${l}</div>`;
      });
      return html + "</div>";
    }

    function cellHtml(text, extra) {
      if (extra === "acct") {
        const [sign, amount] = text.split(" ");
        return `<span class="w-full flex justify-between pl-[5px] pr-[8px]"><span>${sign}</span><span>${amount}</span></span>`;
      }
      return `<span class="w-full whitespace-nowrap pl-[5px] pr-[5px] ${extra}">${text}</span>`;
    }

    function renderRow(row, index) {
      const num = index + 1;
      const headCls = row.active
        ? "bg-[#cfe9dc] border-r border-[#2d7d52]"
        : "bg-[#f5f5f5] border-r border-b border-[#d4d4d4]";
      let html = `<div class="${gridCols} ${row.h}">`;
      html += `<div class="flex items-center justify-center text-[13.5px] text-[#555] font-['Open_Sans',sans-serif] ${headCls}">${row.active ? "" : num}</div>`;
      for (let i = 0; i < letters.length; i++) {
        const l = letters[i];
        const cell = row.cells[l];
        const span = cell && cell[2] ? cell[2] : 1;
        const filled = row.fill && i >= 2;
        let lines = filled ? row.fill : "border-r border-b border-[#d6d6d6]";
        let pad = "pb-[3px]";
        if (cell && cell[4]) {
          lines = (filled ? row.fill : "border-r border-[#d6d6d6]") + " " + cell[4];
          pad = "";
        }
        let cls = `relative flex items-end ${pad} leading-[30px] text-[27px] overflow-hidden ${lines}`;
        if (cell && span > 1) cls += " " + spans[span];
        let inner = cell ? cellHtml(cell[0], cell[1]) : "";
        if (cell && cell[3]) {
          inner += `<span class="absolute left-0 top-0 w-0 h-0 border-t-[9px] border-t-[#1f7a3d] border-r-[9px] border-r-transparent"></span>`;
        }
        if (row.active && l === "E") {
          inner += `<span class="absolute inset-0 border border-[#3c7a4f] shadow-[inset_0_0_0_1.5px_#fff3c8]"></span>`;
        }
        html += `<div class="${cls}">${inner}</div>`;
        i += span - 1;
      }
      return html + "</div>";
    }

    document.getElementById("sheet").innerHTML = columnHeader() + rows.map(renderRow).join("");
  </script>
</body>
</html>
